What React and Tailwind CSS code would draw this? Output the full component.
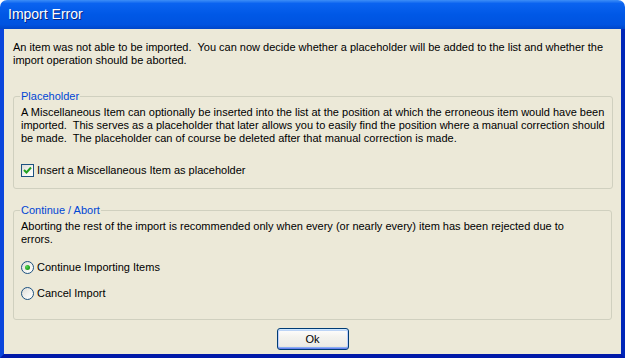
import React, { useState } from "react";

const BODY = [
  "An item was not able to be imported.  You can now decide whether a placeholder will be added to the list and whether the",
  "import operation should be aborted.",
];

const PLACEHOLDER = [
  "A Miscellaneous Item can optionally be inserted into the list at the position at which the erroneous item would have been",
  "imported.  This serves as a placeholder that later allows you to easily find the position where a manual correction should",
  "be made.  The placeholder can of course be deleted after that manual correction is made.",
];

const ABORT = [
  "Aborting the rest of the import is recommended only when every (or nearly every) item has been rejected due to",
  "errors.",
];

const Lines = ({ lines }) => (
  <div>
    {lines.map((l, i) => (
      <div key={i} className="h-[13px] whitespace-pre">
        {l}
      </div>
    ))}
  </div>
);

const CheckBox = ({ checked, onClick, label }) => (
  <div className="flex items-center h-[13px] cursor-default" onClick={onClick}>
    <div className="w-[13px] h-[13px] border border-[#1c5180] bg-[linear-gradient(135deg,#dcdcd7_0%,#f5f5f2_60%,#ffffff_100%)] flex items-center justify-center">
      {checked && (
        <svg width="9" height="9" viewBox="0 0 9 9">
          <path d="M1 4 L3.5 6.5 L8 1.5" stroke="#21a121" strokeWidth="2" fill="none" />
        </svg>
      )}
    </div>
    <span className="ml-[3px]">{label}</span>
  </div>
);

const Radio = ({ checked, onClick, label }) => (
  <div className="flex items-center h-[13px] cursor-default" onClick={onClick}>
    <div className="w-[13px] h-[13px] rounded-full border border-[#1c5180] bg-[linear-gradient(135deg,#dcdcd7_0%,#f5f5f2_60%,#ffffff_100%)] flex items-center justify-center">
      {checked && (
        <div className="w-[5px] h-[5px] rounded-full bg-[radial-gradient(circle_at_35%_35%,#55d651,#21a121_60%,#1a8a1a)]" />
      )}
    </div>
    <span className="ml-[3px]">{label}</span>
  </div>
);

const Group = ({ title, className, children }) => (
  <fieldset className={`border border-[#d0d0bf] rounded-[3px] pl-[6px] pr-[7px] pt-[3px] ${className}`}>
    <legend className="px-[1px] h-[13px] text-[#0046d5]">{title}</legend>
    <div className="pl-[1px]">{children}</div>
  </fieldset>
);

export default function App() {
  const [insert, setInsert] = useState(true);
  const [mode, setMode] = useState("continue");

  return (
    <div className="w-[625px] h-[358px] flex flex-col bg-white font-['Liberation_Sans',Arial,sans-serif] text-[11px] leading-[13px] text-black">
      <div className="h-[29px] shrink-0 rounded-t-[7px] bg-[linear-gradient(180deg,#3d8ef7_0%,#0a63f0_12%,#0058e6_50%,#0053e0_85%,#0046c9_100%)] flex items-center pl-[8px]">
        <span className="text-white text-[14px] [text-shadow:1px_1px_0_#0a1e7a]">Import Error</span>
      </div>
      <div className="flex-1 flex flex-col bg-[#ece9d8] border-l-[4px] border-l-[#0a46dc] border-r-[4px] border-r-[#0026b8] border-b-[4px] border-b-[#0019a8] px-[9px] pt-[12px]">
        <Lines lines={BODY} />

        <Group title="Placeholder" className="mt-[23px] pb-[11px]">
          <Lines lines={PLACEHOLDER} />
          <div className="mt-[19px]">
            <CheckBox
              checked={insert}
              onClick={() => setInsert((v) => !v)}
              label="Insert a Miscellaneous Item as placeholder"
            />
          </div>
        </Group>

        <Group title="Continue / Abort" className="mt-[15px] pb-[19px]">
          <Lines lines={ABORT} />
          <div className="mt-[15px]">
            <Radio
              checked={mode === "continue"}
              onClick={() => setMode("continue")}
              label="Continue Importing Items"
            />
          </div>
          <div className="mt-[13px]">
            <Radio
              checked={mode === "cancel"}
              onClick={() => setMode("cancel")}
              label="Cancel Import"
            />
          </div>
        </Group>

        <div className="flex justify-center mt-[8px]">
          <button className="w-[72px] h-[22px] rounded-[3px] border border-[#003c74] bg-[linear-gradient(180deg,#ffffff_0%,#f4f3ee_40%,#ecebe6_85%,#d6d0c5_100%)] shadow-[inset_0_1px_0_#cee7ff,inset_0_-1px_0_#6982ee,inset_1px_0_0_#bccfff,inset_-1px_0_0_#bccfff,inset_0_2px_0_#bcd4f6,inset_0_-2px_0_#89adf3] text-[11px] text-black">
            Ok
          </button>
        </div>
      </div>
    </div>
  );
}
